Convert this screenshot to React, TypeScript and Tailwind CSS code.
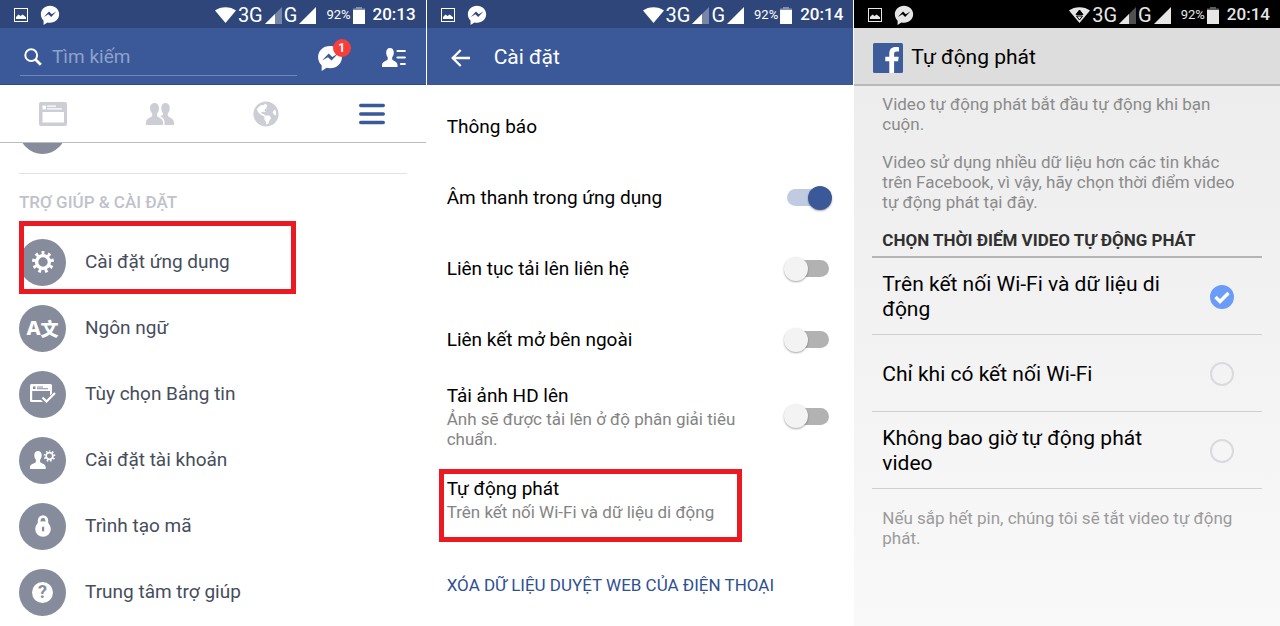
import { useState } from "react";
import type { ReactNode } from "react";
import clsx from "clsx";
import { FaGlobeAmericas } from "react-icons/fa";

const BUBBLE =
  "M12 1C5.7 1 1 5.4 1 11.2c0 3 1.300 5.700 3.300 7.600V24l4.600-3c1 .3 2 .4 3.100.4 6.300 0 11-4.500 11-10.200S18.300 1 12 1Z";
const BOLT = "M4.600 14.400 10.800 7.800l3.300 3.200 5.500-3.200-6.200 6.600-3.300-3.200Z";

function MessengerIcon({ className }: { className?: string }) {
  return (
    <svg viewBox="0 0 24 24" className={className} aria-hidden="true">
      <path fill="currentColor" fillRule="evenodd" d={BUBBLE + BOLT} />
    </svg>
  );
}

function PictureIcon() {
  return (
    <svg viewBox="0 0 14 14" className="size-3.5" aria-hidden="true">
      <rect x="0.5" y="0.5" width="13" height="13" fill="none" stroke="currentColor" />
      <path fill="currentColor" d="M2 11V9l2.500-2.600 2 1.500 2.200-1.500L12 9.200V11Z" />
    </svg>
  );
}

function WifiIcon({ transfer }: { transfer?: boolean }) {
  return (
    <svg viewBox="0 0 21 16" className="h-4 w-[21px]" aria-hidden="true">
      <path fill="currentColor" d="M0 3.500C5.500-1 15.500-1 21 3.500L10.500 16Z" />
      {transfer && (
        <g stroke="#000" strokeWidth="1">
          <path fill="#000" d="M10.500 3 14 7.500H7Z" />
          <path fill="#e6e6e6" d="M7.500 9h6L10.500 13Z" />
        </g>
      )}
    </svg>
  );
}

function SignalIcon({ weak }: { weak?: boolean }) {
  return (
    <svg viewBox="0 0 17 17" className="size-[17px]" aria-hidden="true">
      <path fill="currentColor" opacity={weak ? 0.35 : 1} d="M17 0v17H0Z" />
      {weak && <path fill="currentColor" d="M10 7v10H0Z" />}
    </svg>
  );
}

function BatteryIcon() {
  return (
    <svg viewBox="0 0 12 17" className="h-[17px] w-3" aria-hidden="true">
      <path fill="currentColor" opacity="0.4" d="M3 0h6v1.500h3V4H0V1.500h3Z" />
      <path fill="currentColor" d="M0 3h12v14H0Z" />
    </svg>
  );
}

function StatusBar({
  time,
  className,
  transfer,
}: {
  time: string;
  className: string;
  transfer?: boolean;
}) {
  return (
    <div className={clsx("flex h-7 items-center pt-0.5 pr-2.5 pl-3.5", className)}>
      <PictureIcon />
      <MessengerIcon className="ml-3 size-5" />
      <div className="ml-auto flex items-center">
        <WifiIcon transfer={transfer} />
        <span className="mr-0.5 ml-0.5 text-xl">3G</span>
        <SignalIcon weak />
        <span className="mr-0.5 ml-0.5 text-xl">G</span>
        <SignalIcon />
        <span className="mr-0.5 ml-2.5 text-[13px]">92%</span>
        <BatteryIcon />
        <span className="ml-2 text-[17px] font-medium">{time}</span>
      </div>
    </div>
  );
}

function PersonListIcon() {
  return (
    <svg viewBox="0 0 24 20" className="h-5 w-6" aria-hidden="true">
      <path
        fill="currentColor"
        d="M8 0c2.500 0 3.800 1.900 3.800 4.600 0 2-.6 3.700-1.600 4.600v2.300c0 1 5.300 1.800 5.300 5.500v2H0v-2c0-3.700 5.700-4.500 5.700-5.500V9.200C4.700 8.300 4.200 6.600 4.200 4.600 4.200 1.900 5.500 0 8 0Z"
      />
      <path
        stroke="currentColor"
        strokeWidth="2.200"
        strokeLinecap="round"
        d="M15.500 3h7.300M15.500 9.500h7.300M19 16h3.800"
      />
    </svg>
  );
}

function NewsIcon() {
  return (
    <svg viewBox="0 0 28 24" className="h-6 w-7" aria-hidden="true">
      <path
        fill="currentColor"
        fillRule="evenodd"
        d="M2 0h24q2 0 2 2v20q0 2-2 2H2q-2 0-2-2V2q0-2 2-2ZM3.500 10v10.500h21.500V10ZM3.500 3.500v4H7v-4ZM8 3.500v1.200h9V3.500ZM8 6.200v1.300h15V6.200Z"
      />
    </svg>
  );
}

function FriendsIcon() {
  return (
    <svg viewBox="0 0 28 22" className="h-[22px] w-7" fill="currentColor" aria-hidden="true">
      <path d="M8.500 0c2.800 0 4.500 2.200 4.500 5.200 0 2.300-.8 4.200-2 5.300v2.200c0 1.300 6 2.300 6 6.800V22H0v-2.500c0-4.500 6.200-5.500 6.200-6.800v-2.200C5 9.400 4 7.500 4 5.200 4 2.200 5.800 0 8.500 0Z" />
      <path d="M19.500 0c2.600 0 4.200 2.200 4.200 5.200 0 2.300-.8 4.200-1.900 5.300v2.200c0 1.300 6.200 2.300 6.200 6.800V22h-9.500v-3c0-3.500-2.800-5-4.500-6 1.600-.5 3-.8 3-1.600v-1C16 9.400 15.300 7.500 15.300 5.200 15.300 2.200 17 0 19.500 0Z" />
    </svg>
  );
}

function MenuIcon() {
  return (
    <svg viewBox="0 0 26 22" className="h-[22px] w-[26px]" aria-hidden="true">
      <path
        stroke="currentColor"
        strokeWidth="3.400"
        strokeLinecap="round"
        d="M1.700 2.500h22.600M1.700 11h22.600M1.700 19.500h22.600"
      />
    </svg>
  );
}

function Gear({ x, y, scale = 1 }: { x: number; y: number; scale?: number }) {
  return (
    <g transform={`translate(${x} ${y}) scale(${scale})`} fill="none" stroke="#fff">
      <circle r="6.400" strokeWidth="3.400" />
      <circle
        r="9.200"
        strokeWidth="3.600"
        pathLength="36"
        strokeDasharray="1.800 2.200"
        strokeDashoffset="0.900"
        transform="rotate(-90)"
      />
    </g>
  );
}

function GearIcon() {
  return (
    <svg viewBox="0 0 24 24" className="size-6" aria-hidden="true">
      <Gear x={12} y={12} />
    </svg>
  );
}

function LanguageIcon() {
  return (
    <span
      aria-hidden="true"
      className="flex items-center font-['Noto_Sans',sans-serif] text-xl leading-none font-extrabold text-white"
    >
      A
      <span className="font-['Noto_Sans_CJK_SC',sans-serif] text-lg leading-none font-black">
        文
      </span>
    </span>
  );
}

function FeedPreferencesIcon() {
  return (
    <svg viewBox="0 0 26 20" className="h-5 w-[26px]" aria-hidden="true">
      <path
        fill="#fff"
        fillRule="evenodd"
        d="M1.500 0h19q1.500 0 1.500 1.500V9.500L20 11.500V7H2.200v9h8.800l2 2H1.500Q0 18 0 16.500v-15Q0 0 1.500 0ZM3 2.500V5h2.500V2.500ZM7 2.500v.9h6v-.9ZM7 4.300v.9h11v-.9Z"
      />
      <path fill="none" stroke="#fff" strokeWidth="2.200" d="m12.500 13.500 4 4L25 9" />
    </svg>
  );
}

function AccountIcon() {
  return (
    <svg viewBox="0 0 26 20" className="h-5 w-[26px]" aria-hidden="true">
      <path
        fill="#fff"
        d="M8 1c2.400 0 3.700 1.800 3.700 4.300 0 1.900-.6 3.500-1.600 4.400v2.200c0 1 5.600 1.700 5.600 5.300v1.300q0 .5-.5.5H.5q-.5 0-.5-.5v-1.300c0-3.600 5.900-4.300 5.900-5.300V9.700c-1-.9-1.600-2.500-1.600-4.400C4.300 2.800 5.600 1 8 1Z"
      />
      <Gear x={19.5} y={6} scale={0.53} />
    </svg>
  );
}

function LockIcon() {
  return (
    <svg viewBox="0 0 16 22" className="h-[22px] w-4" aria-hidden="true">
      <path fill="none" stroke="#fff" strokeWidth="2.800" d="M4.200 9V5.500a3.800 3.800 0 0 1 7.600 0V9" />
      <circle cx="8" cy="14" r="7.800" fill="#fff" />
      <rect x="7" y="11.500" width="2.200" height="5" rx="1" fill="#868c9c" />
    </svg>
  );
}

function HelpIcon() {
  return (
    <span
      aria-hidden="true"
      className="flex size-[21px] items-center justify-center rounded-full bg-white text-lg leading-none font-bold text-[#858d9e]"
    >
      ?
    </span>
  );
}

const menuItems: { label: string; icon: ReactNode; highlighted?: boolean }[] = [
  { label: "Cài đặt ứng dụng", icon: <GearIcon />, highlighted: true },
  { label: "Ngôn ngữ", icon: <LanguageIcon /> },
  { label: "Tùy chọn Bảng tin", icon: <FeedPreferencesIcon /> },
  { label: "Cài đặt tài khoản", icon: <AccountIcon /> },
  { label: "Trình tạo mã", icon: <LockIcon /> },
  { label: "Trung tâm trợ giúp", icon: <HelpIcon /> },
];

const tabs = [
  { label: "Bảng tin", icon: <NewsIcon /> },
  { label: "Bạn bè", icon: <FriendsIcon /> },
  { label: "Thông báo", icon: <FaGlobeAmericas className="size-[26px]" /> },
  { label: "Menu", icon: <MenuIcon /> },
];

function MenuScreen() {
  const [activeTab, setActiveTab] = useState("Menu");

  return (
    <section className="flex flex-col overflow-hidden border-r border-white bg-white">
      <StatusBar time="20:13" className="bg-[#2e4679] text-white" />
      <header className="flex h-[57px] items-center border-b border-[#2f4a85] bg-[#3b5998] px-5 pt-[3px] text-white">
        <label className="flex h-9 flex-1 items-center gap-2.5 border-b border-[#7186b6] pl-1">
          <svg viewBox="0 0 18 18" className="size-[18px] shrink-0" aria-hidden="true">
            <circle cx="7.200" cy="7.200" r="5.900" fill="none" stroke="currentColor" strokeWidth="2" />
            <path stroke="currentColor" strokeWidth="2.800" d="m11.500 11.500 5.300 5.300" />
          </svg>
          <input
            type="search"
            aria-label="Tìm kiếm"
            placeholder="Tìm kiếm"
            className="w-full min-w-0 bg-transparent text-[19px] outline-none placeholder:text-[#8fa1cb]"
          />
        </label>
        <button type="button" aria-label="Tin nhắn" className="relative ml-5">
          <MessengerIcon className="size-[26px]" />
          <span className="absolute -top-1.5 -right-2 flex size-[18px] items-center justify-center rounded-full bg-[#f93e3a] text-xs font-bold">
            1
          </span>
        </button>
        <button type="button" aria-label="Danh sách bạn bè" className="ml-[39px]">
          <PersonListIcon />
        </button>
      </header>
      <nav className="grid h-[58px] shrink-0 grid-cols-4 border-b border-[#bcbdc1]">
        {tabs.map((tab) => (
          <button
            key={tab.label}
            type="button"
            aria-label={tab.label}
            onClick={() => setActiveTab(tab.label)}
            className={clsx(
              "flex items-center justify-center",
              activeTab === tab.label ? "text-[#3b5998]" : "text-[#cdced5]",
            )}
          >
            {tab.icon}
          </button>
        ))}
      </nav>
      <div className="overflow-hidden px-[19px]">
        <div className="-mt-9 size-[47px] rounded-full bg-[#868c9c]" />
        <hr className="mt-[19px] border-[#e2e3e6]" />
        <h2 className="mt-4 text-[17px] leading-6 font-medium text-[#bfc2ca]">
          TRỢ GIÚP &amp; CÀI ĐẶT
        </h2>
        <ul className="mt-[15px]">
          {menuItems.map((item) => (
            <li key={item.label} className="relative">
              <button type="button" className="flex h-[66px] w-full items-center gap-[19px] text-left">
                <span className="flex size-[47px] items-center justify-center rounded-full bg-[#868c9c]">
                  {item.icon}
                </span>
                <span className="text-[19px] text-[#464d5c]">{item.label}</span>
              </button>
              {item.highlighted && (
                <span className="pointer-events-none absolute -top-2 left-0 h-[73px] w-[277px] border-5 border-[#eb1921]" />
              )}
            </li>
          ))}
        </ul>
      </div>
    </section>
  );
}

function Toggle({ id, defaultChecked }: { id: string; defaultChecked?: boolean }) {
  return (
    <span className="relative flex h-6 w-12 shrink-0 items-center">
      <input
        id={id}
        type="checkbox"
        role="switch"
        defaultChecked={defaultChecked}
        className="peer ml-[3px] h-[17px] w-[42px] appearance-none rounded-full bg-[#b2b2b2] checked:bg-[#c0cbe2]"
      />
      <span className="pointer-events-none absolute left-0 size-6 rounded-full bg-[#f3f3f3] shadow-[0_1px_2px_rgba(0,0,0,0.35)] peer-checked:left-6 peer-checked:bg-[#3b5998]" />
    </span>
  );
}

const toggles = [
  { id: "sound", label: "Âm thanh trong ứng dụng", checked: true },
  { id: "contacts", label: "Liên tục tải lên liên hệ" },
  { id: "external", label: "Liên kết mở bên ngoài" },
  {
    id: "hd",
    label: "Tải ảnh HD lên",
    description: "Ảnh sẽ được tải lên ở độ phân giải tiêu chuẩn.",
  },
];

function SettingsScreen() {
  return (
    <section className="flex flex-col bg-white">
      <StatusBar time="20:14" className="bg-[#2e4679] text-white" />
      <header className="flex h-[57px] items-center gap-6 bg-[#3b5998] pt-[3px] pl-6 text-white">
        <button type="button" aria-label="Quay lại">
          <svg viewBox="0 0 19 18" className="h-[18px] w-[19px]" aria-hidden="true">
            <path fill="none" stroke="currentColor" strokeWidth="2.300" d="M19 9H1.500M9.700 1 1.700 9l8 8" />
          </svg>
        </button>
        <h1 className="text-[21px]">Cài đặt</h1>
      </header>
      <div className="pt-1.5 pr-[21px] pl-5 text-[19px] leading-[26px] text-black">
        <button type="button" className="flex h-[71px] w-full items-center text-left">
          Thông báo
        </button>
        {toggles.map((item) => (
          <div key={item.id} className="flex min-h-[71px] items-center justify-between py-2">
            <label htmlFor={item.id} className="max-w-[300px]">
              {item.label}
              {item.description && (
                <span className="block text-[17px] leading-5 text-[#848484]">
                  {item.description}
                </span>
              )}
            </label>
            <Toggle id={item.id} defaultChecked={item.checked} />
          </div>
        ))}
        <div className="relative">
          <button type="button" className="w-full py-[19px] text-left">
            Tự động phát
            <span className="block text-[17px] leading-5 text-[#848484]">
              Trên kết nối Wi-Fi và dữ liệu di động
            </span>
          </button>
          <span className="pointer-events-none absolute top-3 -left-2 h-[73px] w-[303px] border-5 border-[#eb1921]" />
        </div>
        <button type="button" className="h-22 text-[17px] text-[#2f4f93]">
          XÓA DỮ LIỆU DUYỆT WEB CỦA ĐIỆN THOẠI
        </button>
      </div>
    </section>
  );
}

const autoplayOptions = [
  "Trên kết nối Wi-Fi và dữ liệu di động",
  "Chỉ khi có kết nối Wi-Fi",
  "Không bao giờ tự động phát video",
];

function AutoplayScreen() {
  const [selected, setSelected] = useState(autoplayOptions[0]);

  return (
    <section className="flex flex-col border-l border-white bg-linear-to-b from-[#ebebeb] to-[#f9f9f9]">
      <StatusBar time="20:14" transfer className="bg-black text-[#e6e6e6]" />
      <header className="flex h-[58px] items-center gap-2 border-b-2 border-[#b9b9b9] bg-[#dddddd] pt-[3px] pl-[19px]">
        <svg viewBox="0 0 30 30" className="size-[30px]" aria-hidden="true">
          <rect width="30" height="30" rx="1.500" fill="#3f5c9a" />
          <path
            fill="#fff"
            d="M16.300 30V18.300h-4v-4.500h4v-3.400c0-4.200 2.500-6.400 6.200-6.400 1.600 0 2.900.1 3.500.2v4.200h-2.400c-2 0-2.500 1-2.500 2.400v3h4.600l-.6 4.500h-4V30Z"
          />
        </svg>
        <h1 className="text-[21px] text-black">Tự động phát</h1>
      </header>
      <div className="px-[18px] pt-2">
        <div className="pr-5 pl-2.5 text-[17px] leading-5 text-[#8b8b8b]">
          <p>Video tự động phát bắt đầu tự động khi bạn cuộn.</p>
          <p className="mt-[18px]">
            Video sử dụng nhiều dữ liệu hơn các tin khác trên Facebook, vì vậy, hãy chọn thời điểm
            video tự động phát tại đây.
          </p>
        </div>
        <fieldset className="mt-2">
          <legend className="w-full border-b-2 border-[#b5b5b5] px-2.5 pt-2 pb-1 text-[17px] leading-6 font-bold text-[#303030]">
            CHỌN THỜI ĐIỂM VIDEO TỰ ĐỘNG PHÁT
          </legend>
          {autoplayOptions.map((option) => (
            <label
              key={option}
              className="flex h-[77px] items-center justify-between border-b border-[#cfcfcf] pt-0.5 pr-7 pl-2.5 text-[21px] leading-[25px] text-black"
            >
              <span className="max-w-[290px]">{option}</span>
              <span className="relative flex size-6 shrink-0">
                <input
                  type="radio"
                  name="autoplay"
                  value={option}
                  checked={selected === option}
                  onChange={() => setSelected(option)}
                  className="peer size-6 appearance-none rounded-full border-2 border-[#d9dadd] checked:border-[#6a9cf8] checked:bg-[#6a9cf8]"
                />
                <svg
                  viewBox="0 0 24 24"
                  className="pointer-events-none absolute inset-0 hidden peer-checked:block"
                  aria-hidden="true"
                >
                  <path fill="none" stroke="#fff" strokeWidth="3.400" d="m5.500 12 4.500 4.500 8.500-8.500" />
                </svg>
              </span>
            </label>
          ))}
        </fieldset>
        <p className="mt-[19px] pr-5 pl-2.5 text-[17px] leading-5 text-[#9b9b9b]">
          Nếu sắp hết pin, chúng tôi sẽ tắt video tự động phát.
        </p>
      </div>
    </section>
  );
}

export default function App() {
  return (
    <main className="grid min-h-screen grid-cols-3 font-[Roboto,sans-serif]">
      <MenuScreen />
      <SettingsScreen />
      <AutoplayScreen />
    </main>
  );
}
